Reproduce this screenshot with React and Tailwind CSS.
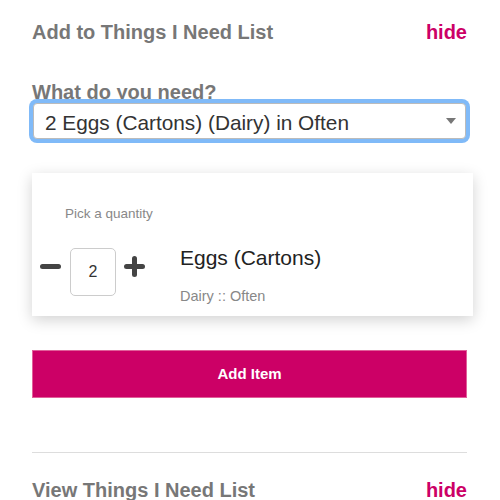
import { useState } from 'react'

export default function App() {
  const [qty, setQty] = useState(2)

  return (
    <div className="w-[500px] h-[500px] overflow-hidden bg-white font-['Liberation_Sans',Arial,sans-serif]">
      <div className="pl-8 pr-[33px] pt-[20px]">
        {/* Header */}
        <div className="flex items-center justify-between h-[24px]">
          <h2 className="text-[20px] font-bold text-[#777]">Add to Things I Need List</h2>
          <a className="text-[20px] font-bold text-[#cc0066]">hide</a>
        </div>

        {/* Select */}
        <div className="mt-[38px]">
          <label className="block text-[20px] font-bold text-[#777] leading-[20px]">What do you need?</label>
          <div className="relative mx-[1px] mt-[1px] flex items-center h-[36px] border border-[#bbb] rounded-[4px] bg-white ring-4 ring-[#80baf8]">
            <span className="pl-[11px] pt-[3px] text-[20.8px] text-[#333]">2 Eggs (Cartons) (Dairy) in Often</span>
            <svg className="absolute right-[9px] top-[14px]" width="10" height="6" viewBox="0 0 10 6">
              <path d="M0 0h10L5 6z" fill="#777" />
            </svg>
          </div>
        </div>

        {/* Card */}
        <div className="mt-[34px] -mr-[6px] bg-white shadow-[0_4px_14px_rgba(0,0,0,0.18)] h-[143px] pt-[31px]">
          <p className="pl-[33px] text-[13.5px] text-[#888]">Pick a quantity</p>
          <div className="flex mt-[24px]">
            <div className="flex items-start pl-[8px] h-[48px]">
              <button onClick={() => setQty(q => Math.max(0, q - 1))} className="mt-[16px] w-[21px] h-[5px]">
                <span className="block w-[21px] h-[5px] rounded-full bg-[#444]" />
              </button>
              <div className="ml-[9px] w-[46px] h-[48px] border border-[#ccc] rounded-[5px] flex items-center justify-center text-[16px] text-[#333]">
                {qty}
              </div>
              <button onClick={() => setQty(q => q + 1)} className="ml-[8px] mt-[8px] w-[21px] h-[21px] relative">
                <span className="absolute left-0 top-[8px] w-[21px] h-[5px] rounded-full bg-[#444]" />
                <span className="absolute left-[8px] top-0 w-[5px] h-[21px] rounded-full bg-[#444]" />
              </button>
            </div>
            <div className="ml-[35px] -mt-[2px]">
              <p className="text-[21px] text-[#222] leading-[24px]">Eggs (Cartons)</p>
              <p className="mt-[16px] text-[14.5px] text-[#888]">Dairy :: Often</p>
            </div>
          </div>
        </div>

        {/* Button */}
        <button className="mt-[34px] w-full h-[48px] bg-[#cc0066] text-white text-[15px] font-bold border border-[#e0609a]">
          Add Item
        </button>

        <div className="mt-[54px] border-t border-[#ddd]" />

        <div className="flex items-center justify-between mt-[25px] h-[24px]">
          <h2 className="text-[20px] font-bold text-[#777]">View Things I Need List</h2>
          <a className="text-[20px] font-bold text-[#cc0066]">hide</a>
        </div>
      </div>
    </div>
  )
}
